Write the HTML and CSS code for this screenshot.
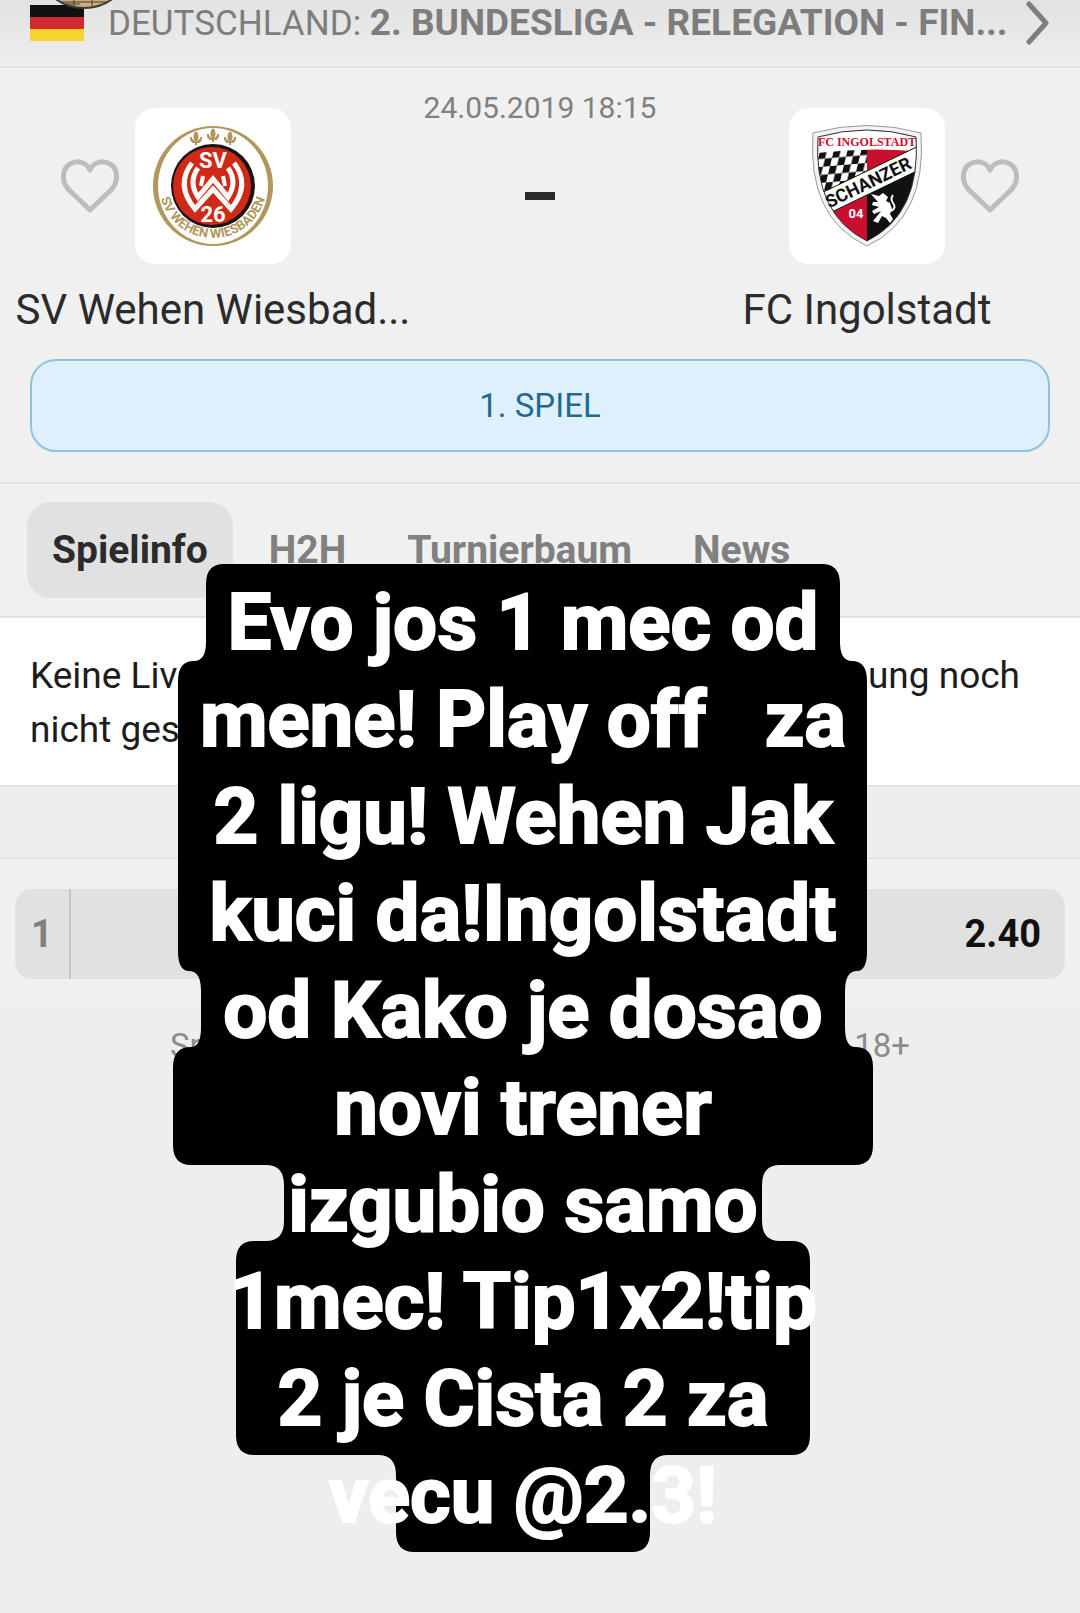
FILE: index.html
```html
<!DOCTYPE html>
<html lang="de">
<head>
  <meta charset="UTF-8">
  <meta name="viewport" content="width=device-width, initial-scale=1.0">
  <title>SV Wehen Wiesbaden - FC Ingolstadt</title>
  <link rel="stylesheet" href="styles.css">
</head>
<body>
<header class="league">
  <svg class="flag" viewBox="0 0 54 36" aria-hidden="true">
    <rect width="54" height="12" fill="#111"/>
    <rect y="12" width="54" height="12" fill="#d22a30"/>
    <rect y="24" width="54" height="12" fill="#f8d22e"/>
  </svg>
  <a class="league-name" href="#">DEUTSCHLAND: <b>2. BUNDESLIGA - RELEGATION - FIN...</b></a>
  <svg class="chevron" viewBox="0 0 24 44" aria-hidden="true"><path d="M3 3 L20 22 L3 41"/></svg>
  <svg class="avatar" viewBox="0 0 60 10" aria-hidden="true">
    <circle cx="30" cy="-41" r="49" fill="#c9ae82" stroke="#3d3a35" stroke-width="2"/>
    <path d="M8 2 H52 M20 0 V6 M38 0 V6 M12 4 H26" stroke="#4a3b2a" stroke-width="1" fill="none"/>
  </svg>
</header>

<section class="match">
  <div class="teams">
    <div class="team">
      <button class="fav" aria-label="SV Wehen Wiesbaden merken">
        <svg viewBox="0 0 58 54"><path d="M29 51 L8 31 C-1 21 2 9 9 5 C17 0 26 4 29 11 C32 4 41 0 49 5 C56 9 59 21 50 31 Z"/></svg>
      </button>
      <div class="crest">
        <svg viewBox="0 0 156 156">
          <defs>
            <path id="ring-text" d="M24 76 A54 54 0 0 0 132 76"/>
            <g id="lily">
              <path d="M0 -7 Q3 -3 0 3 Q-3 -3 0 -7 M-1 3 Q-6 3 -5 -2 M1 3 Q6 3 5 -2 M-4 3 H4 M0 3 V6" stroke="#b0975b" stroke-width="2" fill="#b0975b"/>
            </g>
          </defs>
          <circle cx="78" cy="78" r="60" fill="#b0975b"/>
          <ellipse cx="78" cy="78" rx="55" ry="58" fill="#fff"/>
          <use href="#lily" x="61" y="31"/>
          <use href="#lily" x="78" y="28"/>
          <use href="#lily" x="95" y="31"/>
          <circle cx="78" cy="78" r="42" fill="#1b1216"/>
          <circle cx="77" cy="78" r="39" fill="#cf2a17"/>
          <path d="M57 55 Q40 77 60 101 L78 81 L96 101 Q116 77 99 55" fill="none" stroke="#fff" stroke-width="5"/>
          <path d="M63 60 Q53 74 63 89 L78 71 L93 89 Q103 74 93 60" fill="none" stroke="#fff" stroke-width="5"/>
          <path d="M68 68 L66 78 M88 68 L90 78" fill="none" stroke="#fff" stroke-width="4"/>
          <text x="78" y="60" class="crest-sv">SV</text>
          <text x="78" y="114" class="crest-sv">26</text>
          <text class="crest-ring"><textPath href="#ring-text" startOffset="50%">SV WEHEN WIESBADEN</textPath></text>
        </svg>
      </div>
      <h2 class="team-name">SV Wehen Wiesbad...</h2>
    </div>
    <div class="kickoff">
      <time datetime="2019-05-24T18:15">24.05.2019 18:15</time>
      <span class="dash"></span>
    </div>
    <div class="team away">
      <div class="crest">
        <svg viewBox="0 0 156 156">
          <defs>
            <clipPath id="shield"><path d="M29 29 Q78 15 127 29 Q132 106 78 133 Q24 106 29 29 Z"/></clipPath>
            <pattern id="check" width="14" height="16" patternUnits="userSpaceOnUse" patternTransform="translate(31 43) skewY(-5) skewX(-14)">
              <rect width="14" height="16" fill="#fff"/>
              <rect width="7" height="8" fill="#111"/>
              <rect x="7" y="8" width="7" height="8" fill="#111"/>
            </pattern>
          </defs>
          <path d="M24 25 Q78 10 132 25 Q138 110 78 138 Q18 110 24 25 Z" fill="#f4f4f4" stroke="#999" stroke-width="1"/>
          <g clip-path="url(#shield)">
            <rect x="20" y="15" width="58" height="125" fill="#c8102e"/>
            <rect x="78" y="15" width="58" height="125" fill="#111"/>
            <path d="M78 38 H130 L78 66 Z" fill="#c8102e"/>
            <path d="M20 40 H78 V72 L20 92 Z" fill="url(#check)"/>
            <path d="M20 15 H136 V44 Q78 38 20 46 Z" fill="#fff"/>
            <path d="M20 91 L136 35 V59 L20 115 Z" fill="#fff" stroke="#111" stroke-width="1"/>
            <path d="M82 86 L90 88 L94 85 L99 89 L97 93 L101 95 L103 101 L101 106 L104 111 L101 115 L97 110 L93 108 L89 115 L84 113 L89 107 L92 103 L85 106 L83 103 L90 99 L83 97 L84 94 L89 94 Z" fill="#fff"/>
            <path d="M102 103 Q108 100 104 95 Q101 91 104 87" stroke="#fff" stroke-width="2" fill="none"/>
          </g>
          <path d="M29 29 Q78 15 127 29 Q132 106 78 133 Q24 106 29 29 Z" fill="none" stroke="#333" stroke-width="1"/>
          <text x="78" y="38" class="crest-fc">FC INGOLSTADT</text>
          <text x="82" y="80" class="crest-schanzer" transform="rotate(-26 82 80)">SCHANZER</text>
          <text x="67" y="110" class="crest-04">04</text>
        </svg>
      </div>
      <button class="fav" aria-label="FC Ingolstadt merken">
        <svg viewBox="0 0 58 54"><path d="M29 51 L8 31 C-1 21 2 9 9 5 C17 0 26 4 29 11 C32 4 41 0 49 5 C56 9 59 21 50 31 Z"/></svg>
      </button>
      <h2 class="team-name">FC Ingolstadt</h2>
    </div>
  </div>
  <button class="leg">1. SPIEL</button>
</section>

<nav class="tabs">
  <a class="tab active" href="#">Spielinfo</a>
  <a class="tab" href="#">H2H</a>
  <a class="tab" href="#">Turnierbaum</a>
  <a class="tab" href="#">News</a>
</nav>

<section class="info">
  <p><span>Keine Liv</span><span>ung noch</span></p>
  <p><span>nicht ges</span></p>
</section>

<section class="odds">
  <button class="odd"><span class="odd-label">1</span><span class="odd-value">2.40</span></button>
</section>

<footer class="legal"><span>Sp</span><span>18+</span></footer>

<!-- story caption -->
<div class="caption">
  <svg class="caption-bg" viewBox="0 0 700 988" aria-hidden="true">
    <path d="M51 0 H649 Q667 0 667 20 V78 Q667 97 679 97 Q694 97 694 117 V387 Q694 407 684 407 Q672 407 672 427 V463 Q672 483 682 483 Q700 483 700 503 V581 Q700 601 682 601 H607 Q589 601 589 621 V657 Q589 677 607 677 H619 Q637 677 637 697 V871 Q637 891 619 891 H495 Q477 891 477 911 V968 Q477 988 459 988 H241 Q223 988 223 968 V911 Q223 891 205 891 H81 Q63 891 63 871 V697 Q63 677 81 677 H93 Q111 677 111 657 V621 Q111 601 93 601 H18 Q0 601 0 581 V503 Q0 483 18 483 Q28 483 28 463 V427 Q28 407 16 407 Q5 407 5 387 V117 Q5 97 21 97 Q33 97 33 78 V20 Q33 0 51 0 Z"/>
  </svg>
  <p class="caption-text">Evo jos 1 mec od
mene! Play off   za
2 ligu! Wehen Jak
kuci da!Ingolstadt
od Kako je dosao
novi trener
izgubio samo
1mec! Tip1x2!tip
2 je Cista 2 za
vecu @2.3!</p>
</div>
</body>
</html>
```

FILE: styles.css
```css
* { box-sizing: border-box; }
body { position: relative; margin: 0; min-height: 100vh; background: #eee; font-family: Roboto, "Liberation Sans", sans-serif; color: #2b2b2b; overflow-x: hidden; }
a { color: inherit; text-decoration: none; }
button { font-family: inherit; border: none; background: none; padding: 0; cursor: pointer; }
h2, p { margin: 0; font-weight: normal; }

.league { position: relative; display: flex; align-items: center; padding: 0 30px 21px; height: 68px; background: linear-gradient(#e2e2e2, #eee); border-bottom: 2px solid #e3e3e3; color: #7d7d7d; }
.flag { width: 54px; height: 36px; margin-right: 24px; flex: none; }
.league-name { flex: 1; font-size: 35px; line-height: 45px; white-space: nowrap; }
.league-name b { font-size: 37px; }
.chevron { width: 24px; height: 44px; flex: none; }
.chevron path { fill: none; stroke: #7d7d7d; stroke-width: 5; stroke-linecap: round; stroke-linejoin: round; }
.avatar { position: absolute; left: 54px; top: 0; width: 60px; height: 10px; }

.match { padding-bottom: 30px; background: #f0f0f0; border-bottom: 2px solid #e3e3e3; }
.teams { display: grid; grid-template-columns: 1fr 228px 1fr; }
.team { display: grid; grid-template-columns: 1fr 156px 1fr; column-gap: 16px; align-items: center; padding-top: 40px; }
.team .fav { justify-self: end; }
.away .crest { grid-column: 2; }
.away .fav { justify-self: start; }
.fav svg { display: block; width: 58px; height: 54px; }
.fav path { fill: none; stroke: #bdbdbd; stroke-width: 5; stroke-linejoin: round; }
.crest { width: 156px; height: 156px; background: #fff; border-radius: 20px; }
.crest svg { display: block; }
.crest text { text-anchor: middle; font-weight: bold; }
.crest-sv { fill: #fff; font-size: 22px; }
.crest-ring { fill: #b0975b; font-size: 13px; }
.crest-fc { fill: #c8102e; font: bold 12px "Liberation Serif", serif; }
.crest-schanzer { fill: #111; font-size: 18px; }
.crest-04 { fill: #fff; font-size: 13px; }
.team-name { grid-column: 1 / -1; margin-top: 16px; font-size: 42px; line-height: 60px; text-align: center; white-space: nowrap; }
.kickoff { display: flex; flex-direction: column; align-items: center; padding-top: 20px; }
.kickoff time { font-size: 30px; line-height: 40px; color: #808080; white-space: nowrap; }
.dash { width: 30px; height: 8px; margin-top: 64px; background: #2b2b2b; }
.leg { display: block; width: calc(100% - 60px); height: 93px; margin: 19px 30px 0; border: 2px solid #8fc3dc; border-radius: 26px; background: #def0fc; color: #1f6a94; font-size: 33px; }

.tabs { display: flex; gap: 11px; padding: 18px 27px; background: #f0f0f0; border-bottom: 2px solid #e3e3e3; }
.tab { padding: 0 25px; border-radius: 24px; font-size: 39px; line-height: 96px; font-weight: bold; color: #808080; }
.tab.active { background: #e1e1e1; color: #2b2b2b; }

.info { padding: 31px 30px 28px; background: #fff; border-bottom: 2px solid #e3e3e3; }
.info p { display: flex; justify-content: space-between; padding-right: 30px; font-size: 37px; line-height: 54px; color: #1c1c1c; }

.odds { margin-top: 70px; padding: 30px 15px 28px; border-top: 2px solid #e3e3e3; background: #f0f0f0; }
.odd { display: flex; width: 100%; height: 90px; border-radius: 17px; background: #e1e1e1; align-items: center; justify-content: space-between; padding-right: 24px; font-size: 38px; font-weight: bold; }
.odd-label { width: 56px; line-height: 90px; border-right: 2px solid #c6c6c6; color: #808080; }
.odd-value { color: #111; }

.legal { display: flex; justify-content: space-between; padding: 18px 170px; font-size: 33px; line-height: 42px; color: #8c8c8c; }

/* caption lies over the page */
.caption { position: absolute; top: 564px; left: 173px; width: 700px; }
.caption-bg { display: block; width: 700px; height: 988px; }
.caption-text { position: absolute; top: 10px; left: 0; right: 0; text-align: center; white-space: pre; color: #fff; font-size: 78px; line-height: 97px; font-weight: bold; -webkit-text-stroke: 2px #fff; }
```
